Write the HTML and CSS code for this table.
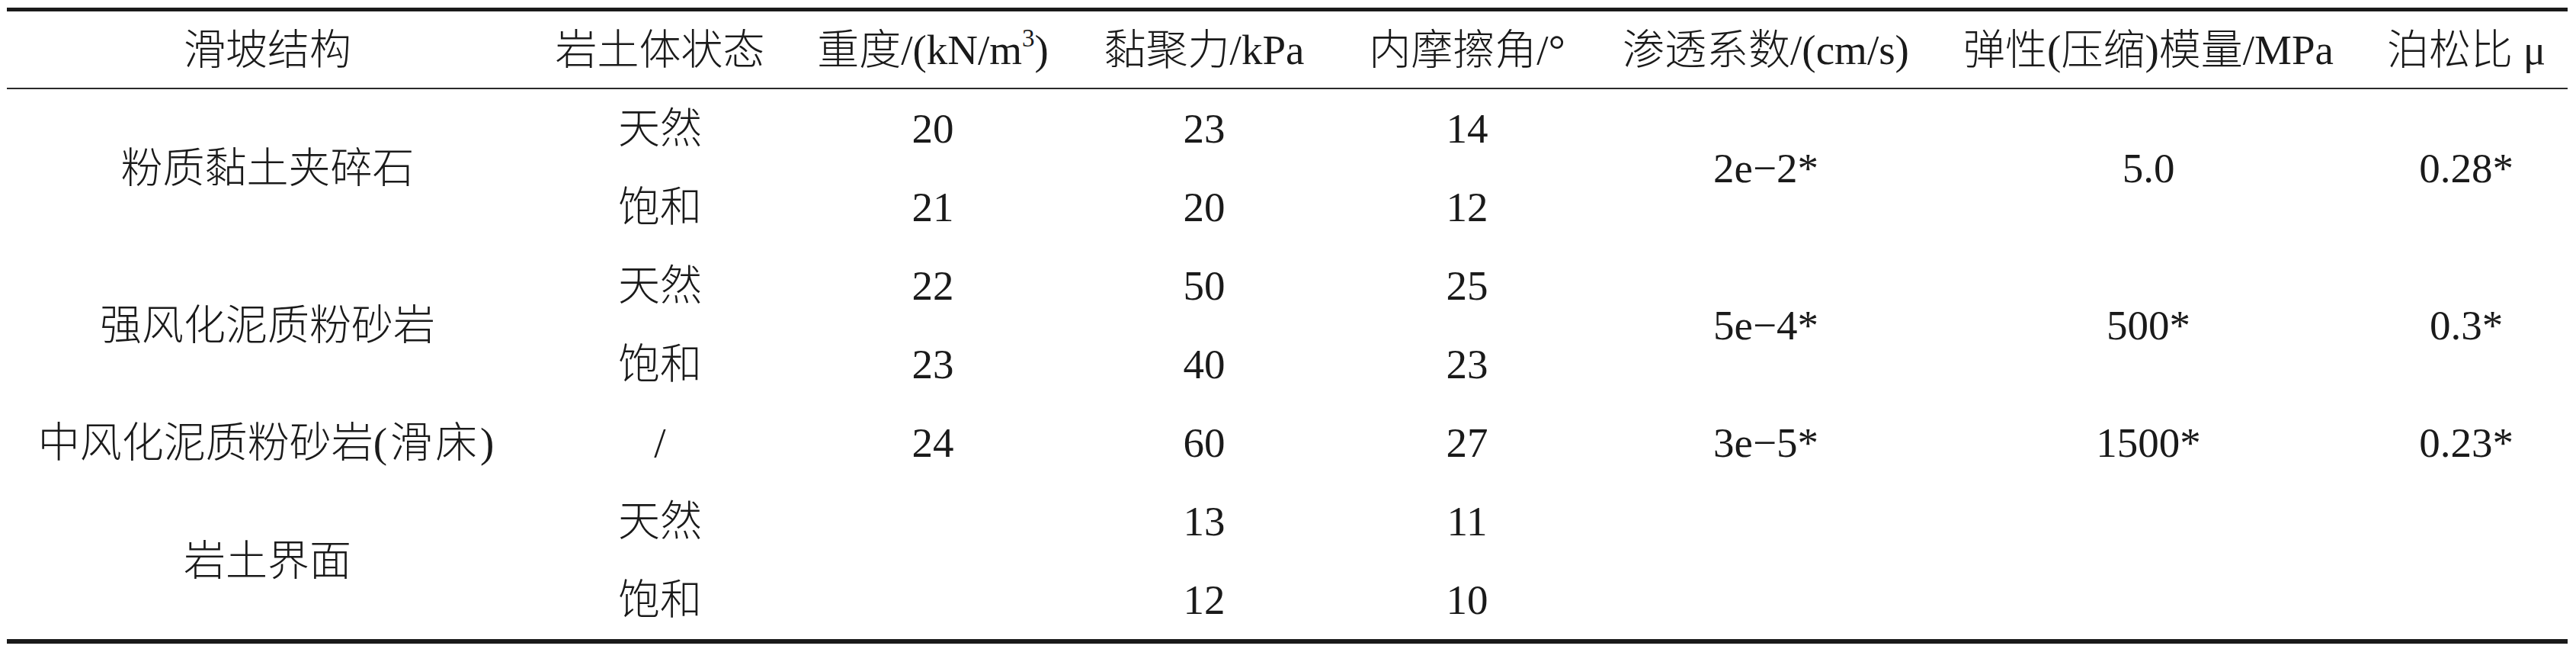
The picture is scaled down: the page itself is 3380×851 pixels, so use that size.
FILE: index.html
```html
<!DOCTYPE html>
<html lang="zh-CN">
<head>
<meta charset="utf-8">
<title>滑坡岩土体参数</title>
<link rel="stylesheet" href="styles.css">
</head>
<body>
<table class="params">
  <colgroup>
    <col class="c1"><col class="c2"><col class="c3"><col class="c4">
    <col class="c5"><col class="c6"><col class="c7"><col class="c8">
  </colgroup>
  <thead>
    <tr>
      <th>滑坡结构</th>
      <th>岩土体状态</th>
      <th>重度/(kN/m<sup>3</sup>)</th>
      <th>黏聚力/kPa</th>
      <th>内摩擦角/°</th>
      <th>渗透系数/(cm/s)</th>
      <th>弹性(压缩)模量/MPa</th>
      <th>泊松比 μ</th>
    </tr>
  </thead>
  <tbody>
    <tr>
      <td rowspan="2">粉质黏土夹碎石</td>
      <td>天然</td><td>20</td><td>23</td><td>14</td>
      <td rowspan="2">2e−2*</td><td rowspan="2">5.0</td><td rowspan="2">0.28*</td>
    </tr>
    <tr>
      <td>饱和</td><td>21</td><td>20</td><td>12</td>
    </tr>
    <tr>
      <td rowspan="2">强风化泥质粉砂岩</td>
      <td>天然</td><td>22</td><td>50</td><td>25</td>
      <td rowspan="2">5e−4*</td><td rowspan="2">500*</td><td rowspan="2">0.3*</td>
    </tr>
    <tr>
      <td>饱和</td><td>23</td><td>40</td><td>23</td>
    </tr>
    <tr>
      <td>中风化泥质粉砂岩<span class="paren">(滑床)</span></td>
      <td>/</td><td>24</td><td>60</td><td>27</td>
      <td>3e−5*</td><td>1500*</td><td>0.23*</td>
    </tr>
    <tr>
      <td rowspan="2">岩土界面</td>
      <td>天然</td><td></td><td>13</td><td>11</td>
      <td rowspan="2"></td><td rowspan="2"></td><td rowspan="2"></td>
    </tr>
    <tr>
      <td>饱和</td><td></td><td>12</td><td>10</td>
    </tr>
  </tbody>
</table>
</body>
</html>
```

FILE: styles.css
```css
html, body {
  margin: 0;
  padding: 0;
  background: #ffffff;
}

body {
  padding: 10px 0 0 9px;
}

.params {
  table-layout: fixed;
  width: 3360px;
  border-collapse: separate;
  border-spacing: 0;
  border-top: 5px solid #1a1a1a;
  border-bottom: 6px solid #1a1a1a;
  font-family: "Liberation Serif", "Noto Sans CJK SC", serif;
  font-size: 55px;
  line-height: 1;
  color: #1a1a1a;
}

.c1 { width: 684px; }
.c2 { width: 346px; }
.c3 { width: 370px; }
.c4 { width: 342px; }
.c5 { width: 348px; }
.c6 { width: 436px; }
.c7 { width: 568px; }
.c8 { width: 266px; }

.params th,
.params td {
  padding: 0;
  text-align: center;
  vertical-align: middle;
  white-space: nowrap;
  font-weight: 300;
}

.params th {
  height: 100px;
  border-bottom: 2px solid #2a2a2a;
}

.params td {
  height: 103px;
}

.paren {
  letter-spacing: 4px;
}

.params sup {
  font-size: 0.6em;
  line-height: 0;
  vertical-align: 0.7em;
}
```
